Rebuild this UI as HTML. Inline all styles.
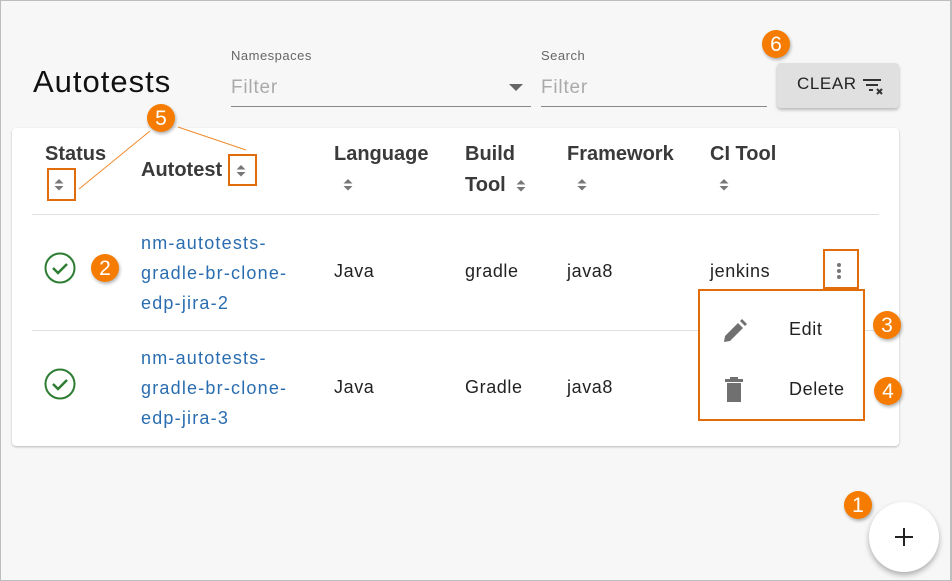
<!DOCTYPE html>
<html><head><style>
*{margin:0;padding:0;box-sizing:border-box}
body{width:952px;height:581px;background:#f7f7f7;font-family:"Liberation Sans",sans-serif;position:relative;overflow:hidden;color:#222}
.frame{position:absolute;left:0;top:0;width:952px;height:581px;border:1px solid #bdbdbd;border-right:2px solid #bdbdbd}
.a{position:absolute;white-space:nowrap}
.h{font-weight:bold;font-size:20px;color:#3a3a3a}
.t{font-size:18px;color:#222;letter-spacing:0.6px}
.l{font-size:18px;color:#2a6db0;line-height:30px;letter-spacing:1.2px}
.badge{position:absolute;width:28px;height:28px;border-radius:50%;background:#f57c00;color:#fff;font-size:21px;text-align:center;line-height:29px;box-shadow:1px 2px 3px rgba(0,0,0,.3)}
.box{position:absolute;border:2px solid #e06c0a}
.sort{position:absolute;width:10px;height:14px}
</style></head><body>
<div class="frame"></div>
<div class="a" style="left:33px;top:64px;font-size:31px;color:#111;letter-spacing:1px">Autotests</div>
<div class="a" style="left:231px;top:48px;font-size:13px;color:#666;letter-spacing:0.5px">Namespaces</div>
<div class="a" style="left:231px;top:77px;font-size:19px;color:#aaa;letter-spacing:0.8px">Filter</div>
<div style="position:absolute;left:231px;top:106px;width:300px;height:1px;background:#888"></div>
<svg class="a" style="left:509px;top:84px" width="14" height="8"><path d="M0 0L14 0L7 7Z" fill="#666"/></svg>
<div class="a" style="left:541px;top:48px;font-size:13px;color:#666;letter-spacing:0.5px">Search</div>
<div class="a" style="left:541px;top:77px;font-size:19px;color:#aaa;letter-spacing:0.8px">Filter</div>
<div style="position:absolute;left:541px;top:106px;width:226px;height:1px;background:#888"></div>
<div style="position:absolute;left:777px;top:63px;width:122px;height:45px;background:#e0e0e0;border-radius:4px;box-shadow:0 2px 3px rgba(0,0,0,.25)"></div>
<div class="a" style="left:797px;top:74px;font-size:17px;letter-spacing:0.6px;color:#222">CLEAR</div>
<svg class="a" style="left:863px;top:78px" width="22" height="18"><path d="M0 2h18M3 7h12M6 12h4" stroke="#333" stroke-width="2"/><path d="M14 11l5 5M19 11l-5 5" stroke="#333" stroke-width="2"/></svg>
<div class="badge" style="left:762px;top:30px">6</div>

<div style="position:absolute;left:12px;top:128px;width:887px;height:318px;background:#fff;border-radius:4px;box-shadow:0 1px 2px rgba(0,0,0,.25)"></div>
<div style="position:absolute;left:32px;top:214px;width:847px;height:1px;background:#e0e0e0"></div>
<div style="position:absolute;left:32px;top:330px;width:847px;height:1px;background:#e0e0e0"></div>

<div class="a h" style="left:45px;top:143px">Status</div>
<div class="a h" style="left:141px;top:159px">Autotest</div>
<div class="a h" style="left:334px;top:143px">Language</div>
<div class="a h" style="left:465px;top:143px">Build</div>
<div class="a h" style="left:465px;top:174px">Tool</div>
<div class="a h" style="left:567px;top:143px">Framework</div>
<div class="a h" style="left:710px;top:143px">CI Tool</div>
<svg width="0" height="0" style="position:absolute"><defs><g id="s"><path d="M0.5 5.5L5 1L9.5 5.5ZM0.5 8L9.5 8L5 12.5Z" fill="#777"/></g></defs></svg>
<svg class="sort" style="left:54px;top:178px"><use href="#s"/></svg>
<svg class="sort" style="left:236px;top:164px"><use href="#s"/></svg>
<svg class="sort" style="left:343px;top:178px"><use href="#s"/></svg>
<svg class="sort" style="left:516px;top:179px"><use href="#s"/></svg>
<svg class="sort" style="left:577px;top:178px"><use href="#s"/></svg>
<svg class="sort" style="left:719px;top:178px"><use href="#s"/></svg>
<div class="box" style="left:47px;top:168px;width:29px;height:33px"></div>
<div class="box" style="left:228px;top:154px;width:29px;height:32px"></div>
<svg class="a" style="left:0;top:0" width="300" height="200"><path d="M79 189L150 131M178 127L246 150" stroke="#f08a2a" stroke-width="1"/></svg>
<div class="badge" style="left:147px;top:104px">5</div>

<svg class="a" style="left:44px;top:252px" width="33" height="33"><circle cx="16" cy="16" r="14.5" fill="none" stroke="#2e7d32" stroke-width="2"/><path d="M9 16l5 5 9-9" fill="none" stroke="#2e7d32" stroke-width="2.5"/></svg>
<div class="badge" style="left:91px;top:254px">2</div>
<div class="a l" style="left:141px;top:228px">nm-autotests-<br>gradle-br-clone-<br>edp-jira-2</div>
<div class="a t" style="left:334px;top:261px">Java</div>
<div class="a t" style="left:465px;top:261px">gradle</div>
<div class="a t" style="left:567px;top:261px">java8</div>
<div class="a t" style="left:710px;top:261px">jenkins</div>
<div class="box" style="left:823px;top:249px;width:36px;height:40px"></div>
<svg class="a" style="left:836px;top:262px" width="6" height="18"><circle cx="3" cy="3" r="2" fill="#777"/><circle cx="3" cy="9" r="2" fill="#777"/><circle cx="3" cy="15" r="2" fill="#777"/></svg>

<svg class="a" style="left:44px;top:368px" width="33" height="33"><circle cx="16" cy="16" r="14.5" fill="none" stroke="#2e7d32" stroke-width="2"/><path d="M9 16l5 5 9-9" fill="none" stroke="#2e7d32" stroke-width="2.5"/></svg>
<div class="a l" style="left:141px;top:343px">nm-autotests-<br>gradle-br-clone-<br>edp-jira-3</div>
<div class="a t" style="left:334px;top:377px">Java</div>
<div class="a t" style="left:465px;top:377px">Gradle</div>
<div class="a t" style="left:567px;top:377px">java8</div>

<div style="position:absolute;left:698px;top:289px;width:167px;height:132px;background:#fff;border:2px solid #e06c0a"></div>
<svg class="a" style="left:722px;top:318px" width="26" height="26"><path d="M2 24l1-6L16 5l5 5L8 23ZM18 3l2-2 5 5-2 2Z" fill="#707070"/></svg>
<div class="a t" style="left:789px;top:319px">Edit</div>
<svg class="a" style="left:724px;top:376px" width="20" height="28"><path d="M1 3h18v3H1ZM6 1h8v2H6ZM3 7h14v19H3Z" fill="#707070"/></svg>
<div class="a t" style="left:789px;top:379px">Delete</div>
<div class="badge" style="left:873px;top:311px">3</div>
<div class="badge" style="left:874px;top:377px">4</div>

<div style="position:absolute;left:869px;top:502px;width:70px;height:70px;border-radius:50%;background:#fff;box-shadow:0 3px 6px rgba(0,0,0,.3)"></div>
<svg class="a" style="left:894px;top:527px" width="20" height="20"><path d="M10 1v18M1 10h18" stroke="#222" stroke-width="2"/></svg>
<div class="badge" style="left:844px;top:491px">1</div>
</body></html>
